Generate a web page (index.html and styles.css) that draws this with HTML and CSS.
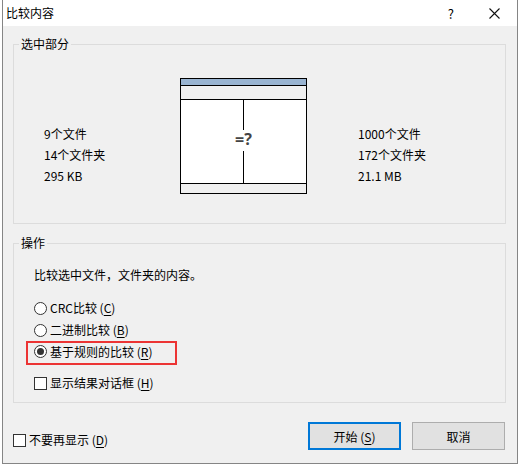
FILE: index.html
```html
<!DOCTYPE html>
<html lang="zh-CN">
<head>
  <meta charset="utf-8">
  <title>比较内容</title>
  <link rel="stylesheet" href="styles.css">
</head>
<body>
  <div class="dialog">
    <!-- title bar -->
    <div class="titlebar">
      <span class="title">比较内容</span>
      <span class="help">?</span>
      <span class="close">
        <svg width="11" height="11" viewBox="0 0 11 11"><path d="M0.5 0.5 L10.5 10.5 M10.5 0.5 L0.5 10.5" stroke="#111" stroke-width="1.1"/></svg>
      </span>
    </div>

    <div class="client">
      <!-- selection summary -->
      <fieldset class="group">
        <legend>选中部分</legend>
        <div class="compare">
          <div class="stats">
            <div>9个文件</div>
            <div>14个文件夹</div>
            <div>295 KB</div>
          </div>
          <div class="diagram">
            <div class="d-head"></div>
            <div class="d-bar"></div>
            <div class="d-panes">
              <div class="d-pane"></div>
              <div class="d-split">
                <span class="d-line d-line-top"></span>
                <span class="d-mark">=?</span>
                <span class="d-line"></span>
              </div>
              <div class="d-pane"></div>
            </div>
            <div class="d-foot"></div>
          </div>
          <div class="stats stats-right">
            <div>1000个文件</div>
            <div>172个文件夹</div>
            <div>21.1 MB</div>
          </div>
        </div>
      </fieldset>

      <!-- action options -->
      <fieldset class="group group-action">
        <legend>操作</legend>
        <div class="actions">
          <p class="desc">比较选中文件，文件夹的内容。</p>
          <label class="option opt-first"><span class="radio"></span>CRC比较 (<u>C</u>)</label>
          <label class="option opt-second"><span class="radio"></span>二进制比较 (<u>B</u>)</label>
          <label class="option marked"><span class="radio checked"></span>基于规则的比较 (<u>R</u>)</label>
          <label class="option opt-check"><span class="check"></span>显示结果对话框 (<u>H</u>)</label>
        </div>
      </fieldset>

      <!-- footer -->
      <div class="footer">
        <label class="option no-show"><span class="check"></span>不要再显示 (<u>D</u>)</label>
        <div class="buttons">
          <button class="btn btn-default">开始 (<u>S</u>)</button>
          <button class="btn">取消</button>
        </div>
      </div>
    </div>
  </div>
</body>
</html>
```

FILE: styles.css
```css
/* reset */
* {
  margin: 0;
  padding: 0;
  box-sizing: border-box;
}
body {
  background: #fff;
  font-family: "Noto Sans CJK SC", "Noto Sans", sans-serif;
  font-size: 12px;
  color: #000;
}
u {
  text-underline-offset: 2px;
}
/* window frame */
.dialog {
  margin-left: 2px;
  width: 516px;
  height: 464px;
  border: 1px solid #858585;
  border-top: none;
  background: #f0f0f0;
  display: flex;
  flex-direction: column;
}
.titlebar {
  height: 26px;
  background: #fff;
  display: flex;
  align-items: center;
  padding-left: 3px;
}
.title {
  flex: 1;
  line-height: 26px;
}
.help {
  font-size: 13px;
  margin-right: 17px;
}
.close {
  width: 46px;
  display: flex;
  justify-content: center;
  padding-top: 1px;
}
/* client area */
.client {
  flex: 1;
  padding: 0 11px 0 10px;
  display: flex;
  flex-direction: column;
}
/* group boxes */
.group {
  border: 1px solid #dcdcdc;
  margin-top: 10px;
  min-width: 0;
}
.group legend {
  margin-left: 5px;
  padding: 0 2px;
  line-height: 16px;
}
.group-action {
  margin-top: 11px;
}
/* selection summary */
.compare {
  display: flex;
  align-items: flex-start;
  padding: 26px 0 29px 30px;
}
.stats {
  width: 136px;
  margin-top: 45px;
  line-height: 21px;
}
.stats-right {
  width: auto;
  margin-left: 51px;
}
.diagram {
  width: 127px;
  border: 1px solid #000;
}
.d-head {
  height: 7px;
  background: #99b4d1;
  border-bottom: 1px solid #000;
}
.d-bar {
  height: 14px;
  border-bottom: 1px solid #000;
}
.d-panes {
  height: 84px;
  background: #fff;
  border-bottom: 1px solid #000;
  display: flex;
}
.d-pane {
  flex: 1;
}
.d-split {
  width: 1px;
  display: flex;
  flex-direction: column;
  align-items: center;
}
.d-line {
  width: 1px;
  flex: 1;
  background: #000;
}
.d-line-top {
  flex: none;
  height: 30px;
}
.d-mark {
  height: 21px;
  line-height: 18px;
  font-family: "Noto Sans", sans-serif;
  font-size: 16px;
  font-weight: bold;
  color: #444;
  white-space: nowrap;
}
.d-foot {
  height: 9px;
}
/* action options */
.actions {
  padding: 14px 0 9px 20px;
}
.desc {
  line-height: 20px;
}
.option {
  display: flex;
  align-items: center;
  height: 20px;
  line-height: 20px;
}
.opt-first {
  margin-top: 13px;
}
.opt-second {
  margin-top: 2px;
}
.marked {
  width: 151px;
  height: 24px;
  margin: 1px 0 0 -8px;
  padding: 0 0 3px 6px;
  border: 2px solid #ec3434;
}
.opt-check {
  margin-top: 8px;
}
.radio,
.check {
  width: 13px;
  height: 13px;
  border: 1px solid #333;
  background: #fff;
  margin-right: 3px;
  flex: none;
}
.radio {
  border-radius: 50%;
  display: flex;
  align-items: center;
  justify-content: center;
}
.radio.checked::after {
  content: "";
  width: 7px;
  height: 7px;
  border-radius: 50%;
  background: #333;
}
/* footer */
.footer {
  display: flex;
  align-items: flex-start;
  padding: 19px 1px 0 0;
}
.no-show {
  margin-top: 8px;
  flex: 1;
}
.buttons {
  display: flex;
  gap: 11px;
}
.btn {
  width: 93px;
  height: 28px;
  background: #e1e1e1;
  border: 1px solid #adadad;
  font-family: inherit;
  font-size: 12px;
  color: #000;
}
.btn-default {
  border: 2px solid #0078d7;
}
```
